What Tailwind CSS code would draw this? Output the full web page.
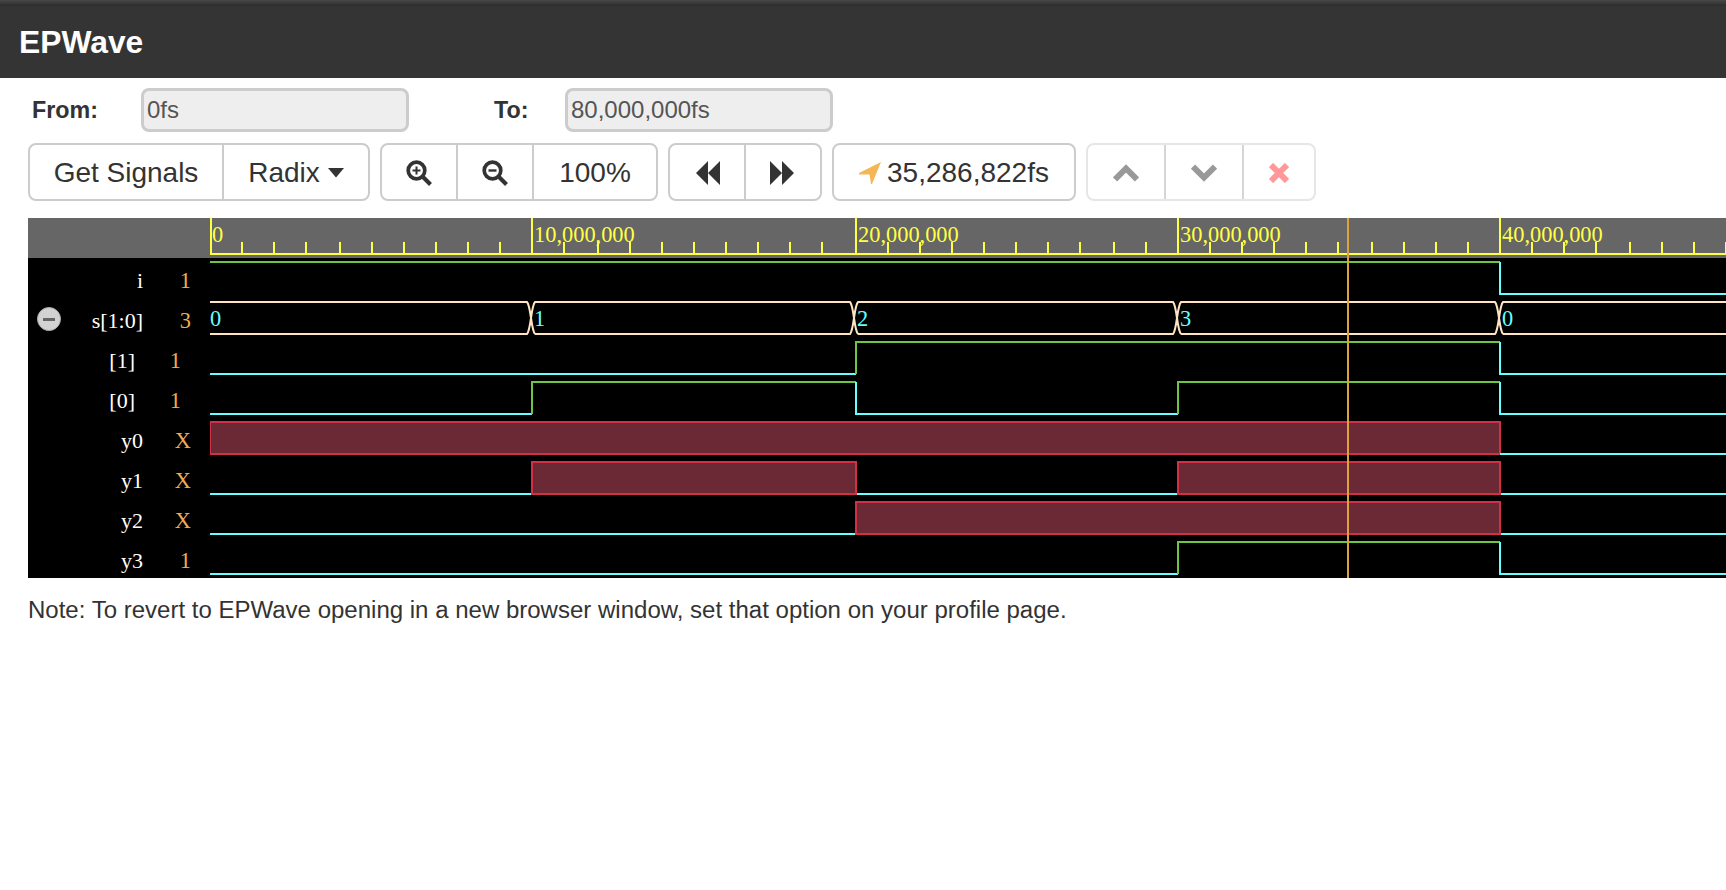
<!DOCTYPE html>
<html lang="en">
<head>
    <meta charset="UTF-8">
    <title>EPWave</title>
    <script src="https://cdn.jsdelivr.net/npm/@tailwindcss/browser@4"></script>
</head>
<body class="bg-white min-h-screen overflow-hidden font-['Liberation_Sans',Arial,sans-serif] text-[#333]">
    <!-- title bar -->
    <div class="h-[78px] bg-[#343434] flex flex-col">
        <div class="h-[6px] bg-gradient-to-b from-[#484848] to-[#2c2c2c]"></div>
        <div class="flex-1 flex items-center pl-[19px] pt-[2px] text-white font-bold text-[31.8px]">EPWave</div>
    </div>

    <!-- from / to -->
    <div class="flex items-center mt-[10px] pl-[32px] h-[44px]">
        <label class="w-[109px] font-bold text-[23.3px]">From:</label>
        <input disabled value="0fs" class="w-[268px] h-[44px] px-[3px] bg-[#eee] border-[3px] border-[#ccc] rounded-lg text-[24px] text-[#555]">
        <label class="w-[71px] ml-[85px] font-bold text-[23.3px]">To:</label>
        <input disabled value="80,000,000fs" class="w-[268px] h-[44px] px-[3px] bg-[#eee] border-[3px] border-[#ccc] rounded-lg text-[24px] text-[#555]">
    </div>

    <!-- toolbar -->
    <div class="flex mt-[11px] ml-[28px] h-[58px] text-[28px]">
        <div class="flex w-[342px] border-2 border-[#ccc] rounded-lg">
            <button class="w-[192px] pt-[2px] flex items-center justify-center">Get Signals</button>
            <button class="flex-1 pt-[2px] flex items-center justify-center gap-[8px] border-l-2 border-[#ccc]">Radix
                <svg width="16" height="10" viewBox="0 0 16 10"><path d="M0 0H16L8 9.500Z" fill="#333"/></svg>
            </button>
        </div>
        <div class="flex w-[278px] ml-[10px] border-2 border-[#ccc] rounded-lg">
            <button class="w-[74px] pt-[2px] flex items-center justify-center">
                <svg width="26" height="26" viewBox="0 0 26 26" fill="none" stroke="#333"><circle cx="10.500" cy="10.500" r="8.300" stroke-width="3.700"/><path d="M16.500 16.500L24.500 24.500" stroke-width="4"/><path d="M6.500 10.500H14.500M10.500 6.500V14.500" stroke-width="2"/></svg>
            </button>
            <button class="w-[76px] pt-[2px] flex items-center justify-center border-l-2 border-[#ccc]">
                <svg width="26" height="26" viewBox="0 0 26 26" fill="none" stroke="#333"><circle cx="10.500" cy="10.500" r="8.300" stroke-width="3.700"/><path d="M16.500 16.500L24.500 24.500" stroke-width="4"/><path d="M6.500 10.500H14.500" stroke-width="2.400"/></svg>
            </button>
            <button class="flex-1 pt-[2px] flex items-center justify-center border-l-2 border-[#ccc]">100%</button>
        </div>
        <div class="flex w-[154px] ml-[10px] border-2 border-[#ccc] rounded-lg">
            <button class="w-[74px] pt-[2px] pl-[2px] flex items-center justify-center">
                <svg width="24" height="24" viewBox="0 0 24 24" fill="#333"><path d="M12 0V24L0 12ZM24 0V24L12 12Z"/></svg>
            </button>
            <button class="flex-1 pt-[2px] pr-[2px] flex items-center justify-center border-l-2 border-[#ccc]">
                <svg width="24" height="24" viewBox="0 0 24 24" fill="#333"><path d="M0 0V24L12 12ZM12 0V24L24 12Z"/></svg>
            </button>
        </div>
        <button class="w-[244px] ml-[10px] pt-[2px] flex items-center justify-center gap-[6px] border-2 border-[#ccc] rounded-lg">
            <svg width="22" height="22" viewBox="0 0 22 22" fill="#f5b756"><path d="M22 0L0 11V12.500L10.500 12.500L12 22H13Z"/></svg>
            35,286,822fs
        </button>
        <div class="flex w-[230px] ml-[10px] border-2 border-[#e6e6e6] rounded-lg">
            <button class="w-[76px] pt-[2px] flex items-center justify-center">
                <svg width="26" height="18" viewBox="0 0 26 18" fill="none" stroke="#999" stroke-width="6"><path d="M2 15.500L13 4.500L24 15.500"/></svg>
            </button>
            <button class="w-[78px] pt-[2px] flex items-center justify-center border-l-2 border-[#d6d6d6]">
                <svg width="26" height="18" viewBox="0 0 26 18" fill="none" stroke="#999" stroke-width="6"><path d="M2 2.500L13 13.500L24 2.500"/></svg>
            </button>
            <button class="flex-1 pt-[2px] flex items-center justify-center border-l-2 border-[#d6d6d6]">
                <svg width="20" height="20" viewBox="0 0 20 20" fill="none" stroke="#f99" stroke-width="6"><path d="M2 2L18 18M18 2L2 18"/></svg>
            </button>
        </div>
    </div>

    <!-- wave panel -->
    <div class="flex mt-[17px] ml-[28px] h-[360px] bg-black font-['Liberation_Serif','Times_New_Roman',serif] text-[22px] text-white">
        <div class="w-[182px] shrink-0">
            <div class="h-[40px] bg-[#666]"></div>
            <div class="h-[40px] flex pt-[6px]">
                <span class="w-[115px] text-right">i</span><span class="w-[48px] text-right text-[22.4px] text-[#f0ad4e]">1</span>
            </div>
            <div class="h-[40px] flex pt-[6px]">
                <span class="w-[24px] h-[24px] ml-[9px] mt-[3px] rounded-full bg-[#d2d2d2] border border-[#aaa] flex items-center justify-center"><span class="w-[12px] h-[3px] bg-[#666]"></span></span>
                <span class="w-[82px] text-right">s[1:0]</span><span class="w-[48px] text-right text-[22.4px] text-[#f0ad4e]">3</span>
            </div>
            <div class="h-[40px] flex pt-[6px]">
                <span class="w-[107px] text-right">[1]</span><span class="w-[46px] text-right text-[22.4px] text-[#f0ad4e]">1</span>
            </div>
            <div class="h-[40px] flex pt-[6px]">
                <span class="w-[107px] text-right">[0]</span><span class="w-[46px] text-right text-[22.4px] text-[#f0ad4e]">1</span>
            </div>
            <div class="h-[40px] flex pt-[6px]">
                <span class="w-[115px] text-right">y0</span><span class="w-[48px] text-right text-[22.4px] text-[#f0ad4e]">X</span>
            </div>
            <div class="h-[40px] flex pt-[6px]">
                <span class="w-[115px] text-right">y1</span><span class="w-[48px] text-right text-[22.4px] text-[#f0ad4e]">X</span>
            </div>
            <div class="h-[40px] flex pt-[6px]">
                <span class="w-[115px] text-right">y2</span><span class="w-[48px] text-right text-[22.4px] text-[#f0ad4e]">X</span>
            </div>
            <div class="h-[40px] flex pt-[6px]">
                <span class="w-[115px] text-right">y3</span><span class="w-[48px] text-right text-[22.4px] text-[#f0ad4e]">1</span>
            </div>
        </div>
        <svg width="1516" height="360" viewBox="210 218 1516 360" class="shrink-0" fill="none" stroke-width="2">
            <rect x="210" y="218" width="1516" height="40" fill="#666"/>
            <!-- time axis -->
            <path stroke="#ffff44" d="M210 254H1726M211 218V254M532 218V254M856 218V254M1178 218V254M1500 218V254"/>
            <path stroke="#ffff44" d="M242 242V254M274 242V254M306 242V254M340 242V254M372 242V254M404 242V254M436 242V254M468 242V254M500 242V254M564 242V254M598 242V254M630 242V254M662 242V254M694 242V254M726 242V254M758 242V254M790 242V254M822 242V254M888 242V254M920 242V254M952 242V254M984 242V254M1016 242V254M1048 242V254M1080 242V254M1114 242V254M1146 242V254M1210 242V254M1242 242V254M1274 242V254M1306 242V254M1338 242V254M1372 242V254M1404 242V254M1436 242V254M1468 242V254M1532 242V254M1564 242V254M1596 242V254M1630 242V254M1662 242V254M1694 242V254M1726 242V254"/>
            <g fill="#ffff44" font-family="'Liberation Serif','Times New Roman',serif" font-size="22.4">
                <text x="212" y="242">0</text>
                <text x="534" y="242">10,000,000</text>
                <text x="858" y="242">20,000,000</text>
                <text x="1180" y="242">30,000,000</text>
                <text x="1502" y="242">40,000,000</text>
            </g>
            <!-- i -->
            <path stroke="#6cc644" d="M210 262H1500"/>
            <path stroke="#66ffff" d="M1500 262V294H1726"/>
            <!-- s[1:0] -->
            <path stroke="#ffe4c4" d="M210 302H527C531 306 531 330 535 334M210 334H527C531 330 531 306 535 302H850C854 306 854 330 858 334M535 334H850C854 330 854 306 858 302H1173C1177 306 1177 330 1181 334M858 334H1173C1177 330 1177 306 1181 302H1495C1499 306 1499 330 1503 334M1181 334H1495C1499 330 1499 306 1503 302H1726M1503 334H1726"/>
            <g fill="#66ffff" font-family="'Liberation Serif','Times New Roman',serif" font-size="22.4">
                <text x="210" y="326">0</text>
                <text x="534" y="326">1</text>
                <text x="857" y="326">2</text>
                <text x="1180" y="326">3</text>
                <text x="1502" y="326">0</text>
            </g>
            <!-- [1] -->
            <path stroke="#66ffff" d="M210 374H856"/>
            <path stroke="#6cc644" d="M856 374V342H1500"/>
            <path stroke="#66ffff" d="M1500 342V374H1726"/>
            <!-- [0] -->
            <path stroke="#66ffff" d="M210 414H532"/>
            <path stroke="#6cc644" d="M532 414V382H856"/>
            <path stroke="#66ffff" d="M856 382V414H1178"/>
            <path stroke="#6cc644" d="M1178 414V382H1500"/>
            <path stroke="#66ffff" d="M1500 382V414H1726"/>
            <!-- y0 -->
            <path fill="#6b2936" stroke="#d43045" d="M210 422H1500V454H210Z"/>
            <path stroke="#66ffff" d="M1500 454H1726"/>
            <!-- y1 -->
            <path stroke="#66ffff" d="M210 494H532M856 494H1178M1500 494H1726"/>
            <path fill="#6b2936" stroke="#d43045" d="M532 462H856V494H532ZM1178 462H1500V494H1178Z"/>
            <!-- y2 -->
            <path stroke="#66ffff" d="M210 534H856M1500 534H1726"/>
            <path fill="#6b2936" stroke="#d43045" d="M856 502H1500V534H856Z"/>
            <!-- y3 -->
            <path stroke="#66ffff" d="M210 574H1178"/>
            <path stroke="#6cc644" d="M1178 574V542H1500"/>
            <path stroke="#66ffff" d="M1500 542V574H1726"/>
            <!-- cursor -->
            <path stroke="#dba23f" d="M1348 218V578"/>
        </svg>
    </div>

    <p class="mt-[14px] ml-[28px] text-[24.03px] text-[#333]">Note: To revert to EPWave opening in a new browser window, set that option on your profile page.</p>
</body>
</html>
